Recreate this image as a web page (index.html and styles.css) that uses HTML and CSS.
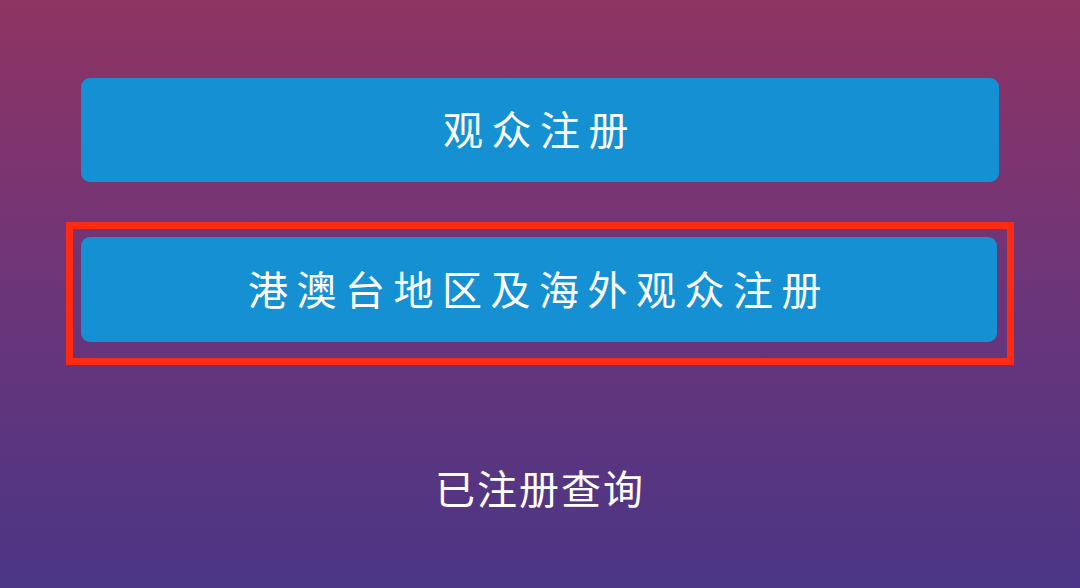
FILE: index.html
```html
<!DOCTYPE html>
<html lang="zh-CN">
<head>
<meta charset="utf-8">
<title>观众注册</title>
<link rel="stylesheet" href="styles.css">
</head>
<body>
<div class="page">
  <div class="btn btn-first">观众注册</div>
  <div class="frame">
    <div class="btn">港澳台地区及海外观众注册</div>
  </div>
  <div class="query">已注册查询</div>
</div>
</body>
</html>
```
FILE: styles.css
```css
html, body {
  margin: 0;
  padding: 0;
}
body {
  font-family: "Noto Sans CJK SC", "Noto Sans", sans-serif;
}
.page {
  width: 1080px;
  height: 588px;
  box-sizing: border-box;
  padding-top: 78px;
  display: flex;
  flex-direction: column;
  background: linear-gradient(180deg, #8f3463 0%, #6c3579 50%, #4b3586 100%);
  overflow: hidden;
}
.btn {
  height: 104px;
  box-sizing: border-box;
  padding-bottom: 4px;
  border-radius: 9px;
  background: #1591d3;
  color: #fff;
  font-size: 40px;
  letter-spacing: 8.5px;
  display: flex;
  align-items: center;
  justify-content: center;
}
.btn-first {
  margin: 0 81px;
}
.frame {
  margin: 40px 66px 0;
  border: 7px solid #ff2a12;
  padding: 8px 10px 16px 8px;
}
.frame .btn {
  height: 105px;
}
.query {
  margin-top: 98px;
  text-align: center;
  color: #fff;
  font-size: 40px;
  letter-spacing: 2px;
  line-height: 48px;
}
```
